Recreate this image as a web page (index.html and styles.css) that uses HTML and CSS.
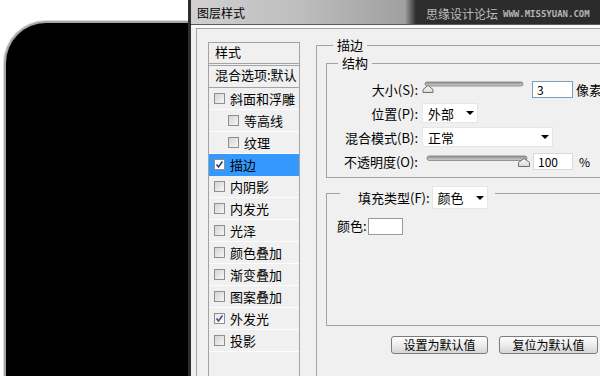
FILE: index.html
```html
<!DOCTYPE html>
<html lang="zh-CN">
<head>
    <meta charset="UTF-8">
    <meta name="viewport" content="width=device-width, initial-scale=1.0">
    <title>图层样式</title>
    <link rel="stylesheet" href="styles.css">
</head>
<body>
<div class="page">
    <div class="canvas">
        <div class="art"></div>
    </div>

    <div class="dialog">
        <div class="titlebar">
            <span class="title">图层样式</span>
            <span class="wm">思缘设计论坛<span class="wm-url">WWW.MISSYUAN.COM</span></span>
        </div>

        <div class="body">
            <div class="frame">
                <!-- style list on the left -->
                <ul class="style-list">
                    <li class="list-head">样式</li>
                    <li class="list-blend">混合选项:默认</li>
                    <li class="item"><span class="cb"></span>斜面和浮雕</li>
                    <li class="item sub"><span class="cb"></span>等高线</li>
                    <li class="item sub"><span class="cb"></span>纹理</li>
                    <li class="item selected"><span class="cb checked"><svg width="9" height="9" viewBox="0 0 9 9"><path d="M1.5 4.5 L3.5 7 L7.5 1.5" fill="none" stroke="#3b3b7c" stroke-width="1.6"/></svg></span>描边</li>
                    <li class="item"><span class="cb"></span>内阴影</li>
                    <li class="item"><span class="cb"></span>内发光</li>
                    <li class="item"><span class="cb"></span>光泽</li>
                    <li class="item"><span class="cb"></span>颜色叠加</li>
                    <li class="item"><span class="cb"></span>渐变叠加</li>
                    <li class="item"><span class="cb"></span>图案叠加</li>
                    <li class="item"><span class="cb checked"><svg width="9" height="9" viewBox="0 0 9 9"><path d="M1.5 4.5 L3.5 7 L7.5 1.5" fill="none" stroke="#4a4a8c" stroke-width="1.6"/></svg></span>外发光</li>
                    <li class="item"><span class="cb"></span>投影</li>
                </ul>

                <!-- settings panel -->
                <div class="panel">
                    <fieldset class="group">
                        <legend>描边</legend>
                        <div class="group-body">
                            <fieldset class="box">
                                <legend>结构</legend>
                                <div class="rows">
                                    <label>大小(S):</label>
                                    <div class="ctl">
                                        <svg class="slider" width="106" height="16" viewBox="0 0 106 16">
                                            <defs>
                                                <linearGradient id="trk" x1="0" y1="0" x2="0" y2="1">
                                                    <stop offset="0" stop-color="#8c8c8c"/>
                                                    <stop offset="1" stop-color="#d4d4d4"/>
                                                </linearGradient>
                                                <linearGradient id="thm" x1="0" y1="0" x2="0" y2="1">
                                                    <stop offset="0" stop-color="#ffffff"/>
                                                    <stop offset="1" stop-color="#d8d8d8"/>
                                                </linearGradient>
                                            </defs>
                                            <rect x="3" y="1" width="98" height="4" rx="2" fill="url(#trk)" stroke="#7d7d7d" stroke-width="0.8"/>
                                            <polygon points="6,4.5 11,8.5 11,11.5 1,11.5 1,8.5" fill="url(#thm)" stroke="#6e6e6e" stroke-width="1"/>
                                        </svg>
                                        <input class="num focus" type="text" value="3">
                                        <span class="unit">像素</span>
                                    </div>

                                    <label>位置(P):</label>
                                    <div class="ctl">
                                        <span class="select short">外部<i class="arrow"></i></span>
                                    </div>

                                    <label>混合模式(B):</label>
                                    <div class="ctl">
                                        <span class="select wide">正常<i class="arrow"></i></span>
                                    </div>

                                    <label>不透明度(O):</label>
                                    <div class="ctl">
                                        <svg class="slider2" width="110" height="16" viewBox="0 0 110 16">
                                            <rect x="5" y="3" width="100" height="4.5" rx="2.2" fill="url(#trk)" stroke="#7d7d7d" stroke-width="0.8"/>
                                            <polygon points="102,5.5 107.5,9.5 107.5,13.5 96.5,13.5 96.5,9.5" fill="url(#thm)" stroke="#6e6e6e" stroke-width="1"/>
                                        </svg>
                                        <input class="num" type="text" value="100">
                                        <span class="unit pct">%</span>
                                    </div>
                                </div>
                            </fieldset>

                            <fieldset class="box fill">
                                <legend>
                                    <span class="fill-label">填充类型(F):</span>
                                    <span class="select fill-select">颜色<i class="arrow"></i></span>
                                </legend>
                                <div class="fill-body">
                                    <span>颜色:</span>
                                    <span class="swatch"></span>
                                </div>
                            </fieldset>

                            <div class="buttons">
                                <button type="button" class="btn-a">设置为默认值</button>
                                <button type="button" class="btn-b">复位为默认值</button>
                            </div>
                        </div>
                    </fieldset>
                </div>
            </div>
        </div>
    </div>
</div>
</body>
</html>
```

FILE: styles.css
```css
* {
    box-sizing: border-box;
}
html, body {
    margin: 0;
    height: 376px;
    overflow: hidden;
}
body {
    background: #fff;
    font-family: "Noto Sans CJK SC", "Noto Sans", sans-serif;
    font-size: 13px;
    color: #000;
}
.page {
    display: flex;
    width: 600px;
    height: 376px;
    overflow: hidden;
}

/* black artwork behind the dialog */
.canvas {
    width: 188px;
    flex: none;
    padding: 21px 0 0 4px;
}
.art {
    height: 400px;
    background: #000;
    border: 2px solid #a6a6a6;
    border-right: none;
    border-radius: 42px 0 0 0;
    box-shadow: 0 0 0 1px #dcdcdc;
}

/* dialog window */
.dialog {
    width: 470px;
    flex: none;
    display: flex;
    flex-direction: column;
    border-left: 3px solid #2e2e2e;
    background: #f0f0f0;
}
.titlebar {
    height: 25px;
    flex: none;
    display: flex;
    align-items: center;
    border-bottom: 1px solid #5a5a5a;
    background: linear-gradient(to right, #d0d0d0 0, #bdbdbd 110px, #a0a0a0 214px, #2d2d2d 225px, #2a2a2a 100%);
}
.title {
    width: 235px;
    padding-left: 6px;
    font-size: 12px;
}
.wm {
    display: flex;
    align-items: center;
    gap: 5px;
    font-size: 12px;
    color: #bdbdbd;
    padding-top: 2px;
}
.wm-url {
    font-family: "DejaVu Sans Mono", monospace;
    font-size: 9px;
    font-weight: bold;
    color: #b5b5b5;
    padding-top: 2px;
}
.body {
    flex: 1;
    border-top: 3px solid #fbfbfb;
    padding-left: 5px;
}
.frame {
    height: 100%;
    display: flex;
    align-items: flex-start;
    border-top: 1px solid #a3a3a3;
    border-left: 1px solid #a3a3a3;
}

/* style list */
.style-list {
    list-style: none;
    margin: 13px 0 0 11px;
    padding: 0;
    width: 92px;
    height: 360px;
    flex: none;
    border: 1px solid #a3a3a3;
}
.list-head {
    height: 23px;
    padding-left: 6px;
    line-height: 18px;
    border-bottom: 3px double #a3a3a3;
}
.list-blend {
    height: 22px;
    padding-left: 6px;
    line-height: 18px;
    white-space: nowrap;
    border-bottom: 1px solid #a3a3a3;
}
.item {
    height: 22px;
    display: flex;
    align-items: center;
    gap: 5px;
    padding-left: 5px;
    border-bottom: 1px solid #fcfcfc;
    white-space: nowrap;
}
.item.sub {
    padding-left: 19px;
}
.item.selected {
    background: #3399ff;
    border-bottom-color: #3399ff;
}
.cb {
    width: 11px;
    height: 11px;
    flex: none;
    display: flex;
    align-items: center;
    justify-content: center;
    border: 1px solid #8f8f8f;
    background: linear-gradient(135deg, #d4d4d4, #f6f6f6);
}
.cb.checked {
    background: linear-gradient(135deg, #e6e6e6, #ffffff);
}
.selected .cb.checked {
    background: #fff;
}

/* right panel */
.panel {
    flex: 1;
    padding: 8px 0 0 16px;
}
fieldset {
    margin: 0;
    padding: 0;
    min-width: 0;
    border: 1px solid #a3a3a3;
}
legend {
    line-height: 16px;
}
.group > legend {
    margin-left: 16px;
    padding: 0 4px;
}
.group-body {
    padding: 2px 0 40px 9px;
}
.box > legend {
    margin-left: 11px;
    padding: 0 4px;
}
.rows {
    display: grid;
    grid-template-columns: 91px auto;
    grid-auto-rows: 24px;
    column-gap: 4px;
    align-items: center;
    padding: 6px 0 4px;
}
.rows label {
    text-align: right;
    white-space: nowrap;
}
.ctl {
    display: flex;
    align-items: center;
}
.slider {
    margin-right: 4px;
}
.slider2 {
    margin-right: 1px;
}
.num {
    width: 41px;
    height: 17px;
    padding: 0 0 0 4px;
    border: 1px solid #d3d9e0;
    background: #fff;
    font-family: inherit;
    font-size: 12px;
    outline: none;
}
.num.focus {
    border-color: #7f9db9;
}
.slider2 + .num {
    width: 40px;
}
.unit {
    margin-left: 3px;
    white-space: nowrap;
}
.unit.pct {
    margin-left: 6px;
    font-size: 12px;
}
.select {
    display: flex;
    align-items: center;
    justify-content: space-between;
    height: 20px;
    padding: 0 3px 0 5px;
    background: #fff;
    border: 1px solid #e6e6e6;
}
.select.short {
    width: 56px;
}
.select.wide {
    width: 131px;
}
.arrow {
    width: 0;
    height: 0;
    border-left: 4px solid transparent;
    border-right: 4px solid transparent;
    border-top: 4px solid #000;
}

/* fill type group */
.fill {
    margin-top: 8px;
}
.fill > legend {
    display: flex;
    align-items: flex-start;
    height: 14px;
    gap: 2px;
    margin-left: 13px;
    padding: 0 7px 0 18px;
}
.fill-label {
    line-height: 23px;
    white-space: nowrap;
}
.select.fill-select {
    width: 56px;
    height: 23px;
    padding: 0 3px 0 5px;
}
.fill-body {
    display: flex;
    align-items: flex-start;
    height: 125px;
    padding: 18px 0 0 10px;
}
.fill-body span:first-child {
    line-height: 16px;
}
.swatch {
    width: 35px;
    height: 17px;
    margin-left: 1px;
    background: #fff;
    border: 1px solid #999;
}

/* bottom buttons */
.buttons {
    display: flex;
    gap: 11px;
    margin-top: 10px;
    padding-left: 65px;
}
.buttons button {
    height: 18px;
    padding: 0;
    font-family: inherit;
    font-size: 12px;
    line-height: 16px;
    color: #000;
    border: 1px solid #7c7c7c;
    border-radius: 3px;
    background: linear-gradient(#fdfdfd, #ececec 50%, #d6d6d6);
}
.btn-a {
    width: 97px;
}
.btn-b {
    width: 99px;
}
```
